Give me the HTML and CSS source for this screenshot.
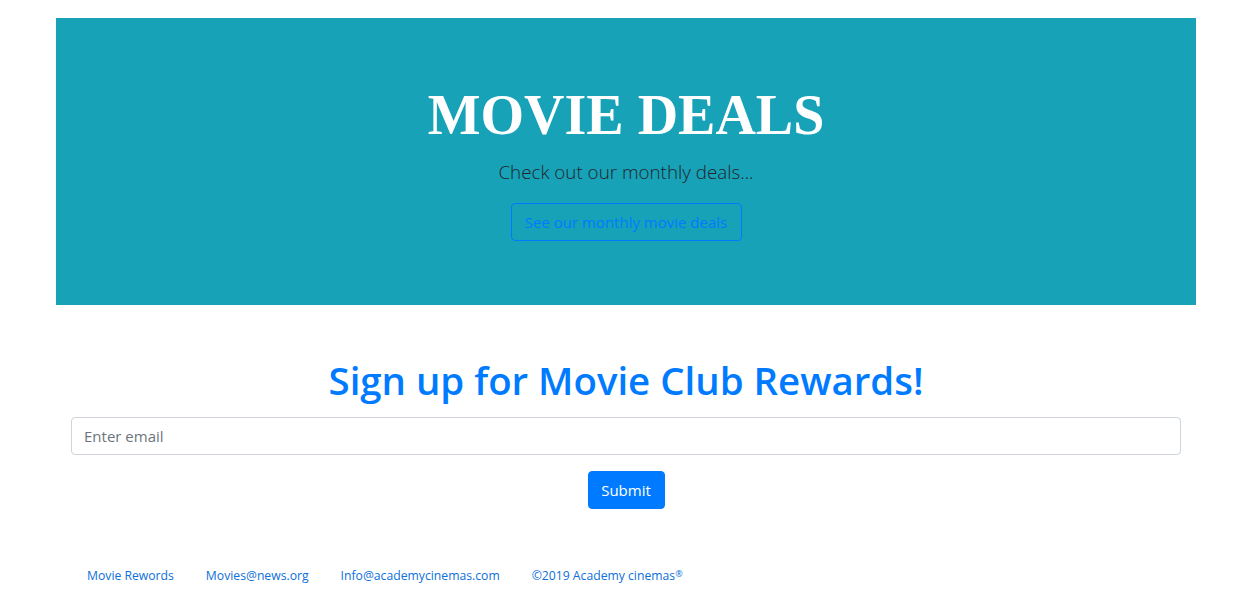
FILE: index.html
```html
<!DOCTYPE html>
<html lang="en">
<head>
<meta charset="utf-8">
<title>Movie Deals</title>
<link rel="stylesheet" href="styles.css">
</head>
<body>
<div class="container">
  <section class="jumbotron">
    <h1 class="display">MOVIE DEALS</h1>
    <p class="lead">Check out our monthly deals...</p>
    <a class="btn btn-outline" href="#">See our monthly movie deals</a>
  </section>
  <section class="signup">
    <h1 class="signup-title">Sign up for Movie Club Rewards!</h1>
    <form class="signup-form">
      <input class="form-control" type="email" placeholder="Enter email">
      <button class="btn btn-primary" type="button">Submit</button>
    </form>
  </section>
  <footer class="footer">
    <a class="nav-link" href="#">Movie Rewords</a>
    <a class="nav-link" href="#">Movies@news.org</a>
    <a class="nav-link" href="#">Info@academycinemas.com</a>
    <a class="nav-link" href="#">©2019 Academy cinemas<sup class="reg">®</sup></a>
  </footer>
</div>
</body>
</html>
```

FILE: styles.css
```css
* { box-sizing: border-box; }
html, body { margin: 0; padding: 0; }
body {
  font-family: "Open Sans", "Noto Sans", sans-serif;
  font-size: 16px;
  line-height: 1.5;
  color: #212529;
  background: #fff;
}
.container {
  width: 1140px;
  margin: 0 0 0 56px;
  padding-top: 18px;
}
.jumbotron {
  background: #17a2b8;
  height: 287px;
  padding: 64px 32px 0;
  text-align: center;
}
.display {
  font-family: "Liberation Serif", "Times New Roman", serif;
  font-weight: 700;
  font-size: 56px;
  line-height: 67px;
  margin: 0 0 8px;
  color: #fff;
}
.lead {
  font-size: 18.8px;
  font-weight: 300;
  line-height: 30px;
  margin: 0 0 16px;
  color: #212529;
}
.btn {
  display: inline-block;
  font-family: inherit;
  font-size: 15px;
  line-height: 24px;
  padding: 6px 12px;
  border: 1px solid transparent;
  border-radius: 4px;
  text-decoration: none;
  cursor: pointer;
}
.btn-outline {
  color: #007bff;
  border-color: #007bff;
  width: 231px;
  height: 38px;
}
.signup {
  padding: 0 15px;
  text-align: center;
}
.signup-title {
  margin: 51px 0 13px;
  font-size: 38.4px;
  font-weight: 600;
  line-height: 48px;
  color: #007bff;
}
.signup-form {
  display: flex;
  flex-direction: column;
  align-items: center;
  gap: 16px;
}
.form-control {
  width: 100%;
  height: 38px;
  padding: 6px 12px;
  font-family: inherit;
  font-size: 15px;
  border: 1px solid #ced4da;
  border-radius: 4px;
  color: #495057;
}
.form-control::placeholder { color: #6c757d; }
.btn-primary {
  background: #007bff;
  color: #fff;
  border-color: #007bff;
  width: 77px;
  height: 38px;
  padding: 6px 0;
}
.footer {
  display: flex;
  padding: 55px 15px 0;
}
.nav-link {
  padding: 0 16px;
  font-size: 12.2px;
  line-height: 24px;
  color: #0d6fd9;
  text-decoration: none;
}
.reg { font-size: 9px; vertical-align: 3px; line-height: 0; }
```
